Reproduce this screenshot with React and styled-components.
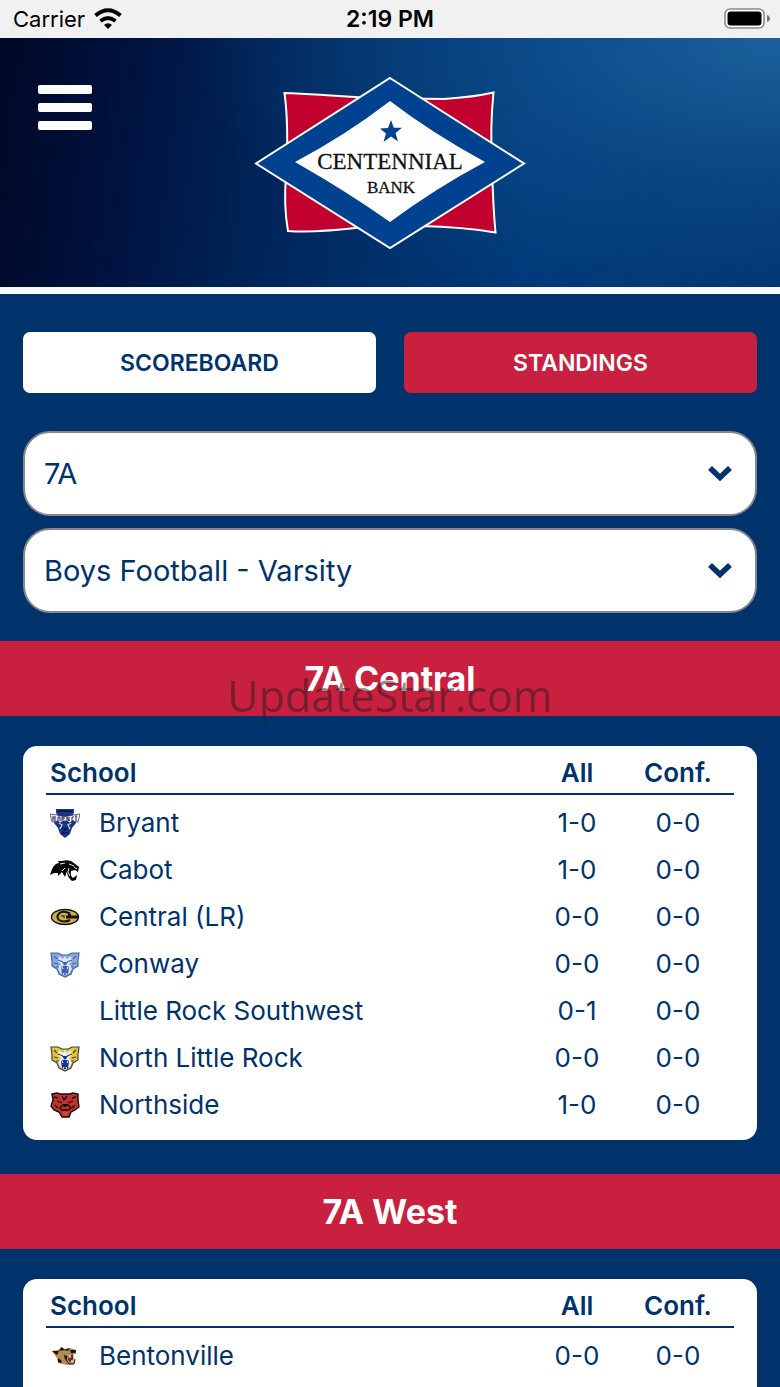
import React from "react";
import styled, { createGlobalStyle } from "styled-components";

const navy = "#00326c";
const red = "#c8203e";

const GlobalStyle = createGlobalStyle`
  *, *::before, *::after { box-sizing: border-box; }
  body { margin: 0; background: ${navy}; }
  body, button, select { font-family: Inter, "Liberation Sans", sans-serif; }
`;

const Screen = styled.div`
  display: flex;
  flex-direction: column;
  height: 100vh;
  overflow: hidden;
  background: ${navy};
  color: ${navy};
`;

const StatusBar = styled.div`
  display: grid;
  grid-template-columns: 1fr auto 1fr;
  align-items: center;
  flex: none;
  height: 38px;
  padding: 0 10px;
  background: #f1f1f1;
  color: #000;
  font-size: 22px;
  line-height: 28px;
`;

const Carrier = styled.div`
  display: flex;
  align-items: center;
  gap: 9px;
  padding-left: 3px;
`;

const Clock = styled.time`
  font-size: 23px;
  font-weight: 600;
`;

const BatteryIcon = styled.svg`
  justify-self: end;
`;

const Header = styled.header`
  display: grid;
  grid-template-columns: 1fr auto 1fr;
  align-items: start;
  flex: none;
  height: 256px;
  padding: 38px 38px 0;
  border-bottom: 7px solid #f4f9fc;
  background:
    radial-gradient(ellipse 75% 115% at 100% 0, rgba(30, 102, 162, 0.9), rgba(18, 86, 148, 0.5) 50%, rgba(0, 60, 120, 0) 100%),
    linear-gradient(97deg, #000826 0%, #00123f 16%, #002458 34%, #00306a 50%, #003878 68%, #00326e 100%);
`;

const MenuButton = styled.button`
  display: flex;
  flex-direction: column;
  gap: 9px;
  width: 54px;
  margin-top: 9px;
  padding: 0;
  border: 0;
  background: none;
`;

const MenuBar = styled.span`
  height: 9px;
  width: 100%;
  border-radius: 2px;
  background: #fff;
`;

const Content = styled.main`
  flex: 1;
  min-height: 0;
  overflow-y: auto;
  scrollbar-width: none;
`;

const Controls = styled.section`
  display: flex;
  flex-direction: column;
  gap: 12px;
  padding: 38px 23px 28px;
`;

const Tabs = styled.div`
  display: flex;
  gap: 28px;
  margin-bottom: 26px;
`;

const TabButton = styled.button`
  flex: 1;
  height: 61px;
  padding: 0;
  border: 0;
  border-radius: 7px;
  background: ${(p) => (p.$active ? red : "#fff")};
  color: ${(p) => (p.$active ? "#fff" : navy)};
  font-size: 23px;
  font-weight: 600;
`;

const SelectBox = styled.label`
  display: grid;
  align-items: center;
`;

const Select = styled.select`
  grid-area: 1 / 1;
  appearance: none;
  width: 100%;
  height: 85px;
  padding: 0 60px 0 19px;
  border: 2px solid #85878c;
  border-radius: 27px;
  background: #fff;
  color: ${navy};
  font-size: 29px;
`;

const Chevron = styled.svg`
  grid-area: 1 / 1;
  justify-self: end;
  margin-right: 24px;
  pointer-events: none;
`;

const Band = styled.h2`
  display: flex;
  align-items: center;
  justify-content: center;
  height: 75px;
  margin: 0;
  background: ${red};
  color: #fff;
  font-size: 34px;
  font-weight: 700;
`;

const Card = styled.div`
  margin: 30px 23px 34px;
  padding: 0 23px 12px;
  border-radius: 14px;
  background: #fff;

  section:last-child > & {
    padding-bottom: 36px;
  }
`;

const Table = styled.table`
  width: 100%;
  table-layout: fixed;
  border-spacing: 0;
  font-size: 26px;
  line-height: 32px;

  tbody::before {
    content: "";
    display: table-row;
    height: 4px;
  }
`;

const IconCol = styled.col`
  width: 53px;
`;
const AllCol = styled.col`
  width: 90px;
`;
const ConfCol = styled.col`
  width: 112px;
`;

const HeadCell = styled.th`
  height: 49px;
  padding: ${(p) => (p.$start ? "7px 0 0 4px" : "7px 0 0")};
  border-bottom: 2px solid ${navy};
  text-align: ${(p) => (p.$start ? "left" : "center")};
  font-weight: 600;
`;

const Cell = styled.td`
  height: 47px;
  padding: 0;
  text-align: ${(p) => (p.$start ? "left" : "center")};
`;

const IconCell = styled(Cell)`
  padding-left: 4px;
  svg { display: block; }
`;

const Watermark = styled.div`
  position: fixed;
  top: 50%;
  left: 50%;
  transform: translate(-50%, -50%);
  padding-top: 4px;
  color: rgba(40, 28, 30, 0.5);
  font-family: "Open Sans", sans-serif;
  font-size: 43px;
  line-height: 60px;
  pointer-events: none;
`;

const Logo = () => (
  <svg width="272" height="174" viewBox="0 0 272 174" role="img" aria-label="Centennial Bank">
    <path d="M30.500 17 Q60 18 114 22 L190 23 Q220 21 239.500 16.500 Q236 50 238 90 Q239 130 241.500 156.500 Q210 151 166 150 L110 151 Q60 157 34 155 Q29.500 130 32 100 Q35 50 30.500 17Z" fill="#c10030" stroke="#fff" strokeWidth="2" />
    <path d="M136 2 L270 87.500 L136 172 L2 87.500Z" fill="#00428f" stroke="#fff" strokeWidth="2" />
    <path d="M136 25 Q178 57 231 86 Q182 112 136 146 Q92 115 41 86 Q92 59 136 25Z" fill="#fff" />
    <path d="M137 44 L139.800 51.700 L148 51.800 L141.500 57 L144 65.500 L137 60.500 L129.500 66 L132 57.500 L126 52.500 L134 52Z" fill="#00428f" />
    <text x="136" y="93" textAnchor="middle" fontFamily="Liberation Serif, serif" fontSize="23" fill="#111" stroke="#111" strokeWidth="0.3">CENTENNIAL</text>
    <text x="137" y="117" textAnchor="middle" fontFamily="Liberation Serif, serif" fontSize="17" fill="#111" stroke="#111" strokeWidth="0.3">BANK</text>
  </svg>
);

const Hornet = () => (
  <>
    <path d="M6 1 L24 1 L24 5 L23 6 L26 15 L22 20 L20 26 L15 30 L10 26 L8 20 L4 15 L7 6 L6 5Z" fill="#17388a" />
    <path d="M8 3H22M10 16L13 21M20 16L17 21M12 25H18M15 20V23" stroke="#0a1a50" strokeWidth="2" />
    <path d="M9 15L12 17L10 21M21 15L18 17L20 21" stroke="#c9d6f2" strokeWidth="1.4" fill="none" />
    <path d="M0 6 L7 7 Q15 10 23 7 L30 6 L28 14 L22 13 L20 15 L17 13 L13 13 L10 15 L8 13 L2 14Z" fill="#f2f2fa" stroke="#2b2d62" strokeWidth="0.7" />
    <path d="M3 8V13M5 8V13M3 10H5M8 9V13M10 9V13M8 9H10M12 13V9H14V11H12M17 13V9L19 13V9M24 9H22V13H24M25 8H27M26 8V13" stroke="#282b62" strokeWidth="1" fill="none" />
  </>
);

const Panther = () => (
  <>
    <path d="M0 20 L2 14 Q5 8 9 8 L8 6 L12 6 Q20 4 24 8 L29 12 L28 17 L25 15 L21 16 Q20 21 23 23 L27 20 L26 25 L22 26 Q17 22 17 16 L15 22 L12 17 L8 21 L8 18 L4 18Z" fill="#050505" />
    <path d="M10 9 L15 8M19 9 L24 11M12 16 L15 13M19 13L18 17L20 21M24 12L27 14" stroke="#fff" strokeWidth="0.9" fill="none" />
  </>
);

const GoldC = () => (
  <>
    <ellipse cx="15" cy="15" rx="13.500" ry="7.500" fill="#cfae4c" stroke="#181510" strokeWidth="1.4" />
    <path d="M20 11.500 Q13 8 9 11.500 Q6 15 9 18 Q14 21 20 18" fill="none" stroke="#15130f" strokeWidth="2" />
    <path d="M16 15 H28 M18 13.500 H21" stroke="#15130f" strokeWidth="3" />
    <path d="M11 14H14V16" fill="none" stroke="#5d4a1c" strokeWidth="1.6" />
  </>
);

const CatFace = ({ base, dark, light, mouth }) => (
  <>
    <path d="M1 4 L8 4 L12 6 L18 6 L22 4 L29 4 L28 12 L28 17 L23 20 L21 25 L15 28 L9 25 L7 20 L2 17 L2 12Z" fill={base} stroke={dark} strokeWidth="1.2" />
    <path d="M9 7 L13 10 L15 7 L17 10 L21 7 L22 12 L19 15 L22 19 L19 25 H11 L8 19 L11 15 L8 12Z" fill={light} />
    <path d="M4 7L7 10M26 7L23 10M4 14L8 15M26 14L22 15M6 18L9 18M24 18L21 18M8 11L13 13M22 11L17 13" stroke={dark} strokeWidth="1.2" />
    <path d="M12 13 H18 L16 16 H14Z M11 18 Q15 15 19 18 L18 26 H12Z" fill={mouth} />
    <path d="M12 18L13 20M18 18L17 20M13 26L14 24M17 26L16 24" stroke="#fff" strokeWidth="1" />
  </>
);

const Bear = () => (
  <>
    <path d="M2 4 L7 3 L10 4 L20 4 L23 3 L28 4 L28 10 L29 17 L25 20 L21 22 L19 27 L12 27 L9 22 L4 20 L1 16 L3 10Z" fill="#c03430" stroke="#180707" strokeWidth="1.4" />
    <path d="M4 7L8 8M26 7L22 8M7 11L12 13M23 11L18 13M12 6L14 10L17 6M5 15L8 18M25 15L22 18M10 18L13 15H18L21 18L18 20H12Z" stroke="#180707" strokeWidth="1.3" fill="none" />
    <path d="M13 14H18L16 17H14Z" fill="#180707" />
    <path d="M13 22H18L17 26H14Z" fill="#d94638" />
  </>
);

const Tiger = () => (
  <>
    <path d="M2 10 L8 9 L11 6 L14 8 L20 7 L26 9 L26 13 L22 14 L19 18 L21 21 L24 19 L23 23 L17 24 L8 22 L7 17Z" fill="#b38b57" />
    <path d="M2 10L9 10L7 14ZM9 10L12 6L15 9ZM14 9L20 7L18 10ZM20 9L26 9L25 13L21 12ZM8 17L12 20L11 22L8 21ZM14 14L17 15L15 19Z" fill="#17130f" />
    <path d="M19 15L24 13L23 20L20 21L18 19Z" fill="#752a20" />
    <path d="M20 14V17M24 12V16M22 21V19" stroke="#fff" strokeWidth="1.2" />
    <path d="M17 15L16 19L19 23H24L25 18" fill="none" stroke="#17130f" strokeWidth="1" />
  </>
);

const mascots = {
  hornet: <Hornet />,
  panther: <Panther />,
  goldC: <GoldC />,
  wampus: <CatFace base="#89a8dc" dark="#42639f" light="#dce7f8" mouth="#3f62a6" />,
  wildcat: <CatFace base="#e3c52d" dark="#3d4358" light="#e9edf5" mouth="#17358d" />,
  bear: <Bear />,
  tiger: <Tiger />,
};

const conferences = [
  {
    name: "7A Central",
    teams: [
      ["hornet", "Bryant", "1-0", "0-0"],
      ["panther", "Cabot", "1-0", "0-0"],
      ["goldC", "Central (LR)", "0-0", "0-0"],
      ["wampus", "Conway", "0-0", "0-0"],
      [null, "Little Rock Southwest", "0-1", "0-0"],
      ["wildcat", "North Little Rock", "0-0", "0-0"],
      ["bear", "Northside", "1-0", "0-0"],
    ],
  },
  { name: "7A West", teams: [["tiger", "Bentonville", "0-0", "0-0"]] },
];

const Dropdown = ({ label, value }) => (
  <SelectBox>
    <Select aria-label={label} defaultValue={value}>
      <option>{value}</option>
    </Select>
    <Chevron width="26" height="18" viewBox="0 0 26 18" aria-hidden="true">
      <path d="M3 3 L13 12.500 L23 3" fill="none" stroke={navy} strokeWidth="5.600" />
    </Chevron>
  </SelectBox>
);

const Standings = ({ name, teams }) => (
  <section>
    <Band>{name}</Band>
    <Card>
      <Table>
        <colgroup>
          <IconCol />
          <col />
          <AllCol />
          <ConfCol />
        </colgroup>
        <thead>
          <tr>
            <HeadCell $start colSpan={2}>School</HeadCell>
            <HeadCell>All</HeadCell>
            <HeadCell>Conf.</HeadCell>
          </tr>
        </thead>
        <tbody>
          {teams.map(([mascot, school, all, conf]) => (
            <tr key={school}>
              <IconCell>
                {mascot && (
                  <svg width="30" height="30" viewBox="0 0 30 30" aria-hidden="true">
                    {mascots[mascot]}
                  </svg>
                )}
              </IconCell>
              <Cell $start>{school}</Cell>
              <Cell>{all}</Cell>
              <Cell>{conf}</Cell>
            </tr>
          ))}
        </tbody>
      </Table>
    </Card>
  </section>
);

export default function App() {
  return (
    <Screen>
      <GlobalStyle />
      <StatusBar>
        <Carrier>
          Carrier
          <svg width="28" height="22" viewBox="0 0 28 22" aria-hidden="true">
            <path d="M1.500 7.500 Q14 -3 26.500 7.500 M6.500 13 Q14 7 21.500 13" fill="none" stroke="#000" strokeWidth="4" />
            <path d="M10 17 Q14 13.500 18 17 L14 21Z" />
          </svg>
        </Carrier>
        <Clock>2:19 PM</Clock>
        <BatteryIcon width="46" height="22" viewBox="0 0 46 22" aria-hidden="true">
          <rect x="1" y="1" width="39" height="19" rx="5" fill="#fff" stroke="#8b8b8b" strokeWidth="1.6" />
          <rect x="3.5" y="3.5" width="34" height="14" rx="3" />
          <path d="M43 7 Q46 8 46 10.500 Q46 13 43 14Z" fill="#777" />
        </BatteryIcon>
      </StatusBar>
      <Header>
        <MenuButton aria-label="Menu">
          <MenuBar />
          <MenuBar />
          <MenuBar />
        </MenuButton>
        <Logo />
      </Header>
      <Content>
        <Controls>
          <Tabs>
            <TabButton>SCOREBOARD</TabButton>
            <TabButton $active>STANDINGS</TabButton>
          </Tabs>
          <Dropdown label="Classification" value="7A" />
          <Dropdown label="Sport" value="Boys Football - Varsity" />
        </Controls>
        {conferences.map((c) => (
          <Standings key={c.name} {...c} />
        ))}
      </Content>
      <Watermark>UpdateStar.com</Watermark>
    </Screen>
  );
}
